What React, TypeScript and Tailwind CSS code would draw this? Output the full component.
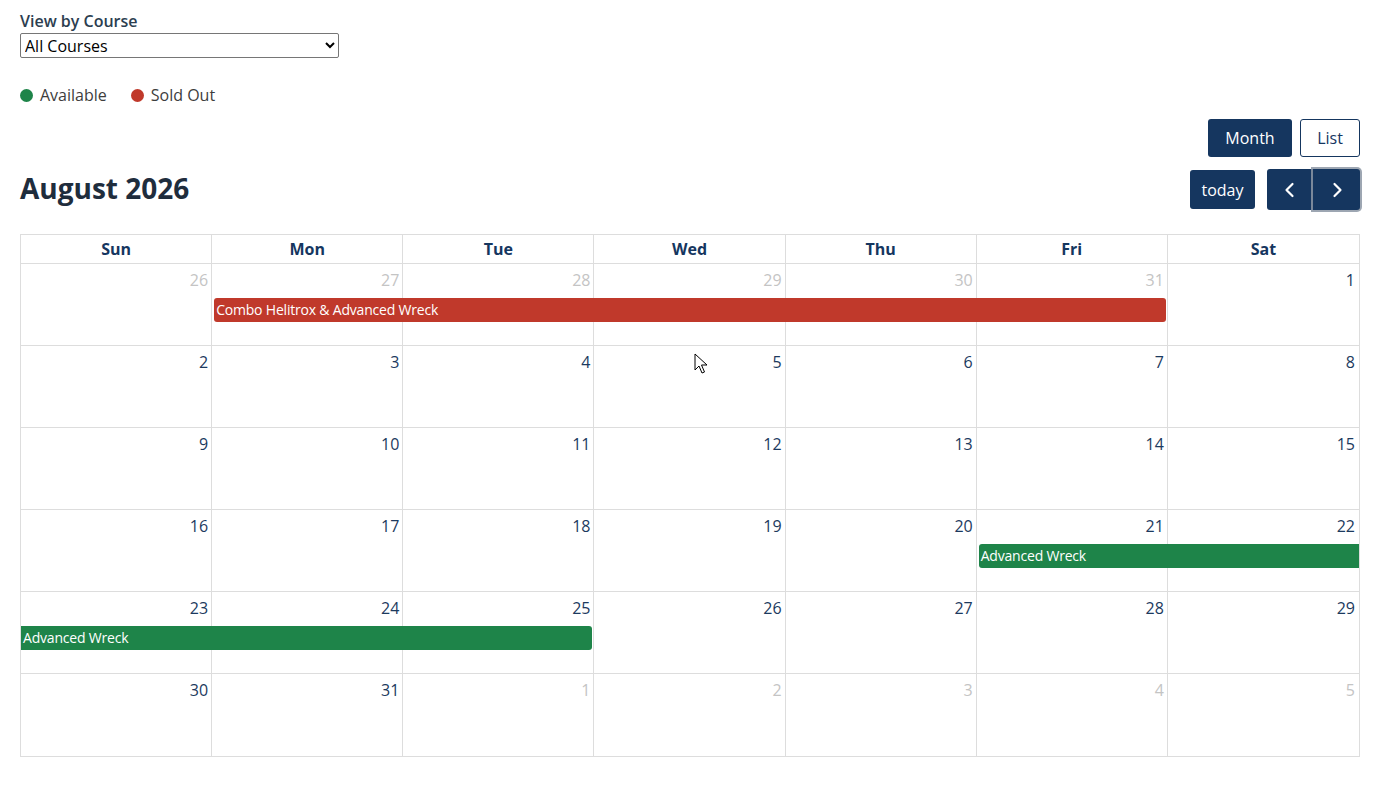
import React from "react";

const days = ["Sun", "Mon", "Tue", "Wed", "Thu", "Fri", "Sat"];

type Day = { n: number; other?: boolean };
type Ev = { title: string; start: number; span: number; color: string; openL?: boolean; openR?: boolean };

const weeks: { days: Day[]; events: Ev[] }[] = [
  {
    days: [
      { n: 26, other: true },
      { n: 27, other: true },
      { n: 28, other: true },
      { n: 29, other: true },
      { n: 30, other: true },
      { n: 31, other: true },
      { n: 1 },
    ],
    events: [{ title: "Combo Helitrox & Advanced Wreck", start: 2, span: 5, color: "red" }],
  },
  { days: [2, 3, 4, 5, 6, 7, 8].map((n) => ({ n })), events: [] },
  { days: [9, 10, 11, 12, 13, 14, 15].map((n) => ({ n })), events: [] },
  {
    days: [16, 17, 18, 19, 20, 21, 22].map((n) => ({ n })),
    events: [{ title: "Advanced Wreck", start: 6, span: 2, color: "green", openR: true }],
  },
  {
    days: [23, 24, 25, 26, 27, 28, 29].map((n) => ({ n })),
    events: [{ title: "Advanced Wreck", start: 1, span: 3, color: "green", openL: true }],
  },
  {
    days: [
      { n: 30 },
      { n: 31 },
      { n: 1, other: true },
      { n: 2, other: true },
      { n: 3, other: true },
      { n: 4, other: true },
      { n: 5, other: true },
    ],
    events: [],
  },
];

const colStart = ["", "col-start-1", "col-start-2", "col-start-3", "col-start-4", "col-start-5", "col-start-6", "col-start-7"];
const colSpan = ["", "col-span-1", "col-span-2", "col-span-3", "col-span-4", "col-span-5", "col-span-6", "col-span-7"];

function EventBar({ ev }: { ev: Ev }) {
  const bg = ev.color === "red" ? "bg-[#c0392b]" : "bg-[#1e8449]";
  const ml = ev.openL ? "ml-0 rounded-l-none" : "ml-[2px] rounded-l-[3px]";
  const mr = ev.openR ? "mr-0 rounded-r-none" : "mr-[2px] rounded-r-[3px]";
  return (
    <div
      className={`${colStart[ev.start]} ${colSpan[ev.span]} row-start-2 z-10 mt-[6px] h-[24px] ${bg} ${ml} ${mr} flex items-center px-[2px] text-[14px] leading-[24px] text-white tracking-[-0.2px] whitespace-nowrap overflow-hidden`}
    >
      {ev.title}
    </div>
  );
}

export default function App() {
  return (
    <div className="relative min-h-[788px] bg-white pl-5 pr-[28px] pt-[10px] text-[16px]" style={{ fontFamily: '"Open Sans", "Liberation Sans", sans-serif' }}>
      <div className="font-semibold text-[#2c3e50] leading-[22px]">View by Course</div>
      <select className="mt-[1px] h-[25px] w-[319px] rounded-[2px] border border-[#767676] bg-white pl-0 text-[16px] leading-[20px] text-black">
        <option>All Courses</option>
      </select>

      <div className="mt-[25px] flex items-center text-[16px] text-[#3d3d3d]">
        <span className="h-[13px] w-[13px] rounded-full bg-[#1e8449]"></span>
        <span className="ml-[7px]">Available</span>
        <span className="ml-[24px] h-[13px] w-[13px] rounded-full bg-[#c0392b]"></span>
        <span className="ml-[7px]">Sold Out</span>
      </div>

      <div className="mt-[12px] flex justify-end gap-[8px]">
        <button className="h-[38px] w-[84px] rounded-[3px] bg-[#15365f] text-[16px] text-white">Month</button>
        <button className="h-[38px] w-[60px] rounded-[3px] border border-[#15365f] bg-white text-[16px] text-[#15365f]">List</button>
      </div>

      <div className="mt-[12px] flex items-center justify-between">
        <h2 className="-mt-[4px] text-[28px] font-bold leading-[38px] text-[#1f2d3d]">August 2026</h2>
        <div className="flex items-center">
          <button className="h-[39px] w-[65px] rounded-[3px] bg-[#15365f] text-[16px] text-white">today</button>
          <div className="ml-[12px] flex h-[41px]">
            <button className="flex w-[46px] items-center justify-center rounded-l-[3px] bg-[#15365f] text-white">
              <svg width="16" height="16" viewBox="0 0 16 16" fill="none" stroke="white" strokeWidth="2.2" strokeLinecap="round" strokeLinejoin="round">
                <path d="M10.5 2 4.5 8l6 6" />
              </svg>
            </button>
            <button className="flex w-[47px] items-center justify-center rounded-r-[3px] bg-[#15365f] text-white shadow-[0_0_0_2px_rgba(140,150,165,0.85)]">
              <svg width="16" height="16" viewBox="0 0 16 16" fill="none" stroke="white" strokeWidth="2.2" strokeLinecap="round" strokeLinejoin="round">
                <path d="M5.5 2l6 6-6 6" />
              </svg>
            </button>
          </div>
        </div>
      </div>

      <div className="mt-[24px] border border-[#dddddd]">
        <div className="grid h-[29px] grid-cols-7 border-b border-[#dddddd]">
          {days.map((d, i) => (
            <div
              key={d}
              className={`flex items-center justify-center text-[16px] font-bold text-[#15365f] ${i < 6 ? "border-r border-[#dddddd]" : ""}`}
            >
              {d}
            </div>
          ))}
        </div>
        {weeks.map((w, wi) => (
          <div
            key={wi}
            className={`grid h-[82px] grid-cols-7 grid-rows-[auto_auto_1fr] ${wi < weeks.length - 1 ? "border-b border-[#dddddd]" : ""}`}
          >
            {w.days.map((d, i) => (
              <div
                key={"bg" + i}
                className={`${colStart[i + 1]} row-start-1 row-span-3 ${i < 6 ? "border-r border-[#dddddd]" : ""}`}
              ></div>
            ))}
            {w.days.map((d, i) => (
              <div
                key={"n" + i}
                className={`${colStart[i + 1]} row-start-1 pr-[4px] pt-[4px] text-right text-[16px] leading-[24px] ${d.other ? "text-[#c4c4c4]" : "text-[#1c3a5e]"}`}
              >
                {d.n}
              </div>
            ))}
            {w.events.map((ev, ei) => (
              <EventBar key={ei} ev={ev} />
            ))}
          </div>
        ))}
      </div>

      <svg className="absolute left-[694px] top-[353px]" width="14" height="21" viewBox="0 0 14 21">
        <path d="M1 1v16l4-4 3 7 2.5-1-3-7h5.5z" fill="white" stroke="black" strokeWidth="1" strokeLinejoin="round" />
      </svg>
    </div>
  );
}
